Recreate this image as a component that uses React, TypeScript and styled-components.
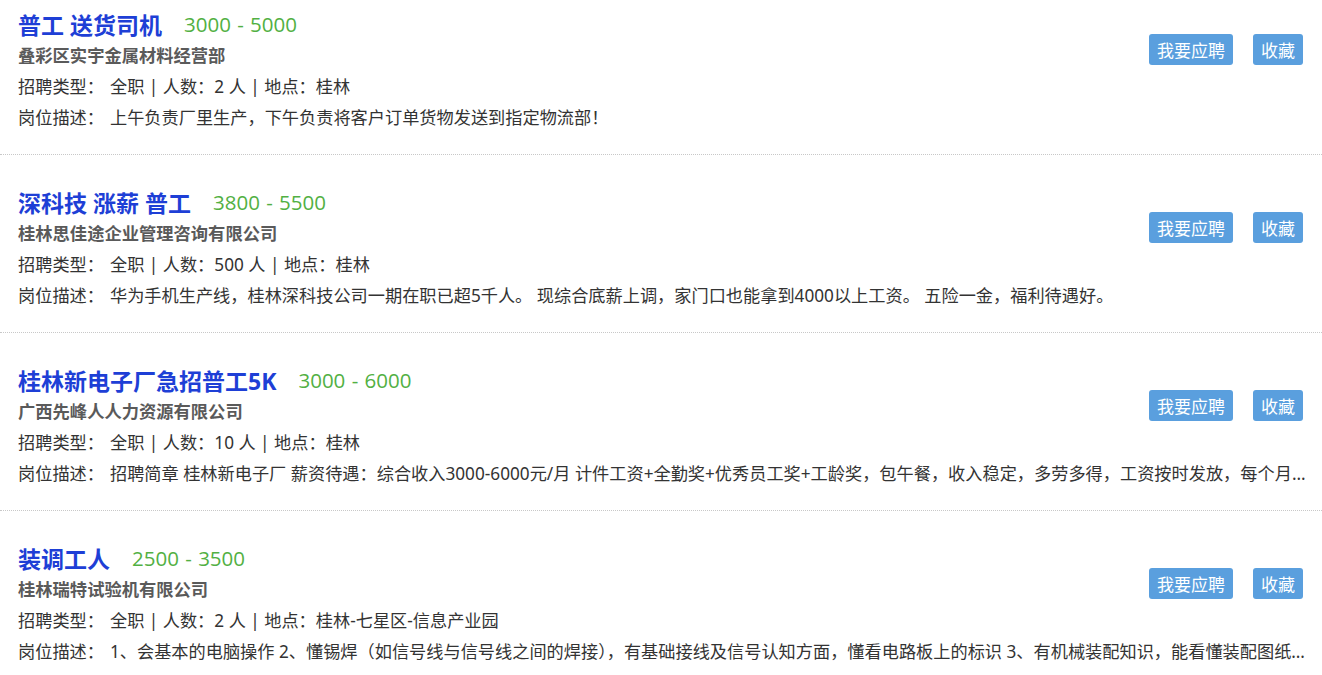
import React from "react";
import styled, { createGlobalStyle } from "styled-components";

const GlobalStyle = createGlobalStyle`
  html, body {
    margin: 0;
    padding: 0;
    background: #ffffff;
  }
  body {
    font-family: "Noto Sans", "Noto Sans CJK SC", sans-serif;
    color: #333;
    overflow: hidden;
  }
`;

const List = styled.div`
  margin-top: -23px;
  width: 1322px;
`;

const ItemWrap = styled.div`
  position: relative;
`;

const Item = styled.div`
  display: flex;
  align-items: flex-start;
  padding: 31px 12px 21px 18px;
  border-bottom: 1px dotted #c8c8c8;
`;

const Info = styled.div`
  display: flex;
  flex-direction: column;
  min-width: 0;
  width: 1292px;
`;

const TitleRow = styled.div`
  display: flex;
  align-items: center;
  height: 32px;
  white-space: nowrap;
`;

const Title = styled.span`
  font-family: "Noto Sans", "Noto Sans CJK SC", sans-serif;
  font-size: 23px;
  font-weight: 700;
  color: #1e3fd6;
  margin-right: 22px;
`;

const Salary = styled.span`
  font-size: 20.5px;
  color: #52b043;
  font-family: "Open Sans", "Noto Sans CJK SC", sans-serif;
  word-spacing: 1px;
`;

const Company = styled.div`
  height: 31px;
  line-height: 31px;
  font-size: 17.3px;
  font-weight: 700;
  color: #5a5a5a;
  white-space: nowrap;
`;

const Line = styled.div`
  height: 31px;
  line-height: 31px;
  font-size: 17.2px;
  color: #333;
  white-space: nowrap;
  overflow: hidden;
  text-overflow: ellipsis;
`;

const Label = styled.span`
  margin-right: 6px;
`;

const Place = styled.span`
  margin-left: 0;
`;

const Actions = styled.div`
  position: absolute;
  right: 19px;
  top: 57px;
  display: flex;
  gap: 20px;
`;

const Button = styled.button`
  height: 31px;
  padding: 0 8px;
  border: none;
  border-radius: 3px;
  background: #5a9fde;
  color: #fff;
  font-family: "Noto Sans CJK SC", sans-serif;
  font-size: 17px;
  line-height: 31px;
  cursor: pointer;
`;

type Job = {
  title: string;
  salary: string;
  company: string;
  count: string;
  place: string;
  desc: string;
};

const jobs: Job[] = [
  {
    title: "普工 送货司机",
    salary: "3000 - 5000",
    company: "叠彩区实宇金属材料经营部",
    count: "2",
    place: "桂林",
    desc: "上午负责厂里生产，下午负责将客户订单货物发送到指定物流部！",
  },
  {
    title: "深科技 涨薪 普工",
    salary: "3800 - 5500",
    company: "桂林思佳途企业管理咨询有限公司",
    count: "500",
    place: "桂林",
    desc: "华为手机生产线，桂林深科技公司一期在职已超5千人。 现综合底薪上调，家门口也能拿到4000以上工资。 五险一金，福利待遇好。",
  },
  {
    title: "桂林新电子厂急招普工5K",
    salary: "3000 - 6000",
    company: "广西先峰人人力资源有限公司",
    count: "10",
    place: "桂林",
    desc: "招聘简章 桂林新电子厂 薪资待遇：综合收入3000-6000元/月 计件工资+全勤奖+优秀员工奖+工龄奖，包午餐，收入稳定，多劳多得，工资按时发放，每个月10号发工资",
  },
  {
    title: "装调工人",
    salary: "2500 - 3500",
    company: "桂林瑞特试验机有限公司",
    count: "2",
    place: "桂林-七星区-信息产业园",
    desc: "1、会基本的电脑操作 2、懂锡焊（如信号线与信号线之间的焊接），有基础接线及信号认知方面，懂看电路板上的标识 3、有机械装配知识，能看懂装配图纸，会使用常用工具",
  },
];

export default function App() {
  return (
    <>
      <GlobalStyle />
      <List>
        {jobs.map((job) => (
          <ItemWrap key={job.title}>
            <Item>
              <Info>
                <TitleRow>
                  <Title>{job.title}</Title>
                  <Salary>{job.salary}</Salary>
                </TitleRow>
                <Company>{job.company}</Company>
                <Line>
                  <Label>招聘类型：</Label>全职 | 人数：{job.count} 人 | 地点：
                  <Place>{job.place}</Place>
                </Line>
                <Line>
                  <Label>岗位描述：</Label>
                  {job.desc}
                </Line>
              </Info>
            </Item>
            <Actions>
              <Button>我要应聘</Button>
              <Button>收藏</Button>
            </Actions>
          </ItemWrap>
        ))}
      </List>
    </>
  );
}
